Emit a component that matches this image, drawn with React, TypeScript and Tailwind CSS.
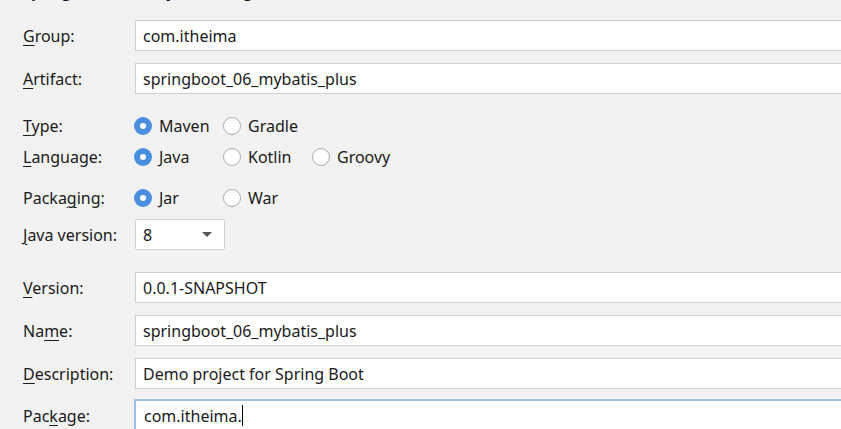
import React from "react";

const font = { fontFamily: '"Noto Sans", "Open Sans", sans-serif' };

function Label({ pre, u, post }: { pre?: string; u: string; post: string }) {
  return (
    <div className="w-[135px] pl-[23px] shrink-0 text-[16px] text-[#1a1a1a] whitespace-nowrap">
      {pre}
      <span className="underline underline-offset-[3px] decoration-1">{u}</span>
      {post}
    </div>
  );
}

function TextRow({
  label,
  value,
  focused,
  mt,
}: {
  label: React.ReactNode;
  value: string;
  focused?: boolean;
  mt: string;
}) {
  return (
    <div className={`flex items-center ${mt}`}>
      {label}
      {focused ? (
        <div className="ml-[-1px] h-[33px] w-[730px] shrink-0 border-2 border-[#9cc0e8] bg-white pl-[8px] flex items-center text-[16px] text-[#1a1a1a]">
          <span>{value}</span>
          <span className="inline-block w-px h-[21px] bg-black" />
        </div>
      ) : (
        <div className="h-[31px] w-[730px] shrink-0 border border-[#cfcfcf] bg-white pl-[7px] flex items-center text-[16px] text-[#1a1a1a]">
          {value}
        </div>
      )}
    </div>
  );
}

function Radio({ checked, text }: { checked?: boolean; text: string }) {
  return (
    <div className="w-[89px] shrink-0 flex items-center gap-[7px]">
      {checked ? (
        <span className="w-[18px] h-[18px] rounded-full bg-[#4a8fde] flex items-center justify-center">
          <span className="w-[6px] h-[6px] rounded-full bg-white" />
        </span>
      ) : (
        <span className="w-[18px] h-[18px] rounded-full bg-white border border-[#ababab]" />
      )}
      <span className="text-[16px] text-[#1a1a1a]">{text}</span>
    </div>
  );
}

function RadioRow({ label, mt, children }: { label: React.ReactNode; mt: string; children: React.ReactNode }) {
  return (
    <div className={`flex items-center h-[22px] ${mt}`}>
      {label}
      <div className="flex items-center ml-[-1px]">{children}</div>
    </div>
  );
}

export default function App() {
  return (
    <div className="w-[841px] h-[429px] overflow-hidden bg-[#f2f2f2]" style={font}>
      <div className="mt-[-18px] h-[20px] leading-[20px] pl-[23px] text-[15px] font-bold text-[#111] whitespace-nowrap">
        Spring Initializr Project Settings
      </div>
      <TextRow mt="mt-[18px]" label={<Label u="G" post="roup:" />} value="com.itheima" />
      <TextRow mt="mt-[12px]" label={<Label u="A" post="rtifact:" />} value="springboot_06_mybatis_plus" />
      <RadioRow mt="mt-[21px]" label={<Label u="T" post="ype:" />}>
        <Radio checked text="Maven" />
        <Radio text="Gradle" />
      </RadioRow>
      <RadioRow mt="mt-[9px]" label={<Label u="L" post="anguage:" />}>
        <Radio checked text="Java" />
        <Radio text="Kotlin" />
        <Radio text="Groovy" />
      </RadioRow>
      <RadioRow mt="mt-[19px]" label={<Label pre="Packa" u="g" post="ing:" />}>
        <Radio checked text="Jar" />
        <Radio text="War" />
      </RadioRow>
      <div className="flex items-center mt-[10px]">
        <Label u="J" post="ava version:" />
        <div className="h-[31px] w-[90px] border border-[#cfcfcf] rounded-[2px] bg-white pl-[7px] pr-[12px] flex items-center justify-between text-[16px] text-[#1a1a1a]">
          <span>8</span>
          <svg width="10" height="6" viewBox="0 0 10 6">
            <path d="M0 0 L10 0 L5 5 Z" fill="#555" />
          </svg>
        </div>
      </div>
      <TextRow mt="mt-[22px]" label={<Label u="V" post="ersion:" />} value="0.0.1-SNAPSHOT" />
      <TextRow mt="mt-[12px]" label={<Label pre="Na" u="m" post="e:" />} value="springboot_06_mybatis_plus" />
      <TextRow mt="mt-[12px]" label={<Label u="D" post="escription:" />} value="Demo project for Spring Boot" />
      <TextRow mt="mt-[10px]" focused label={<Label pre="Pac" u="k" post="age:" />} value="com.itheima." />
    </div>
  );
}
